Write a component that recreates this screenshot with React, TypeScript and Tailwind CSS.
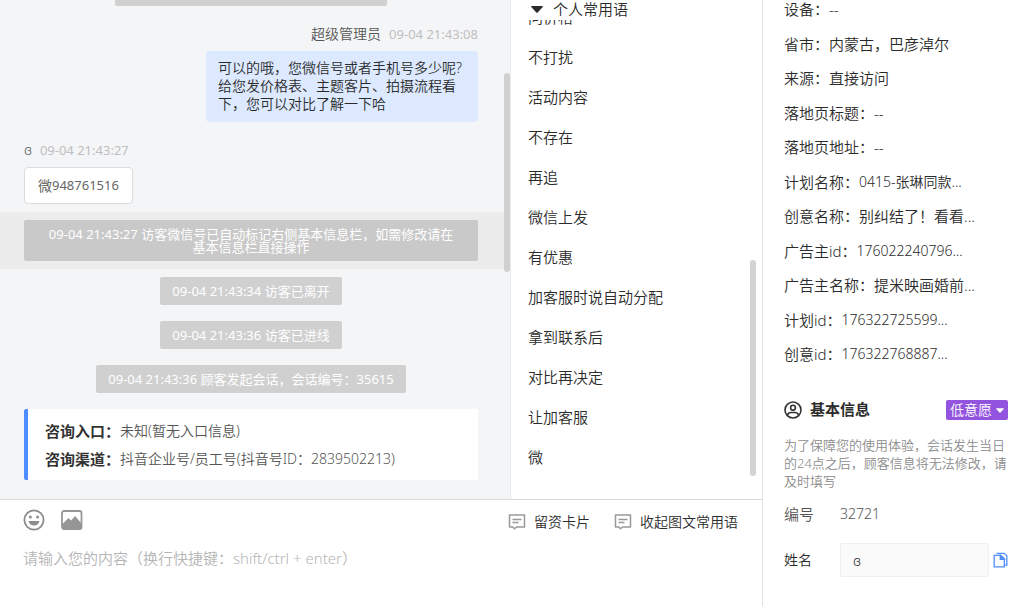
import React from 'react';

type Notice = { time: string; text: string; active?: boolean };

const notices: Notice[] = [
  { time: '09-04 21:43:27', text: '访客微信号已自动标记右侧基本信息栏，如需修改请在基本信息栏直接操作', active: true },
  { time: '09-04 21:43:34', text: '访客已离开' },
  { time: '09-04 21:43:36', text: '访客已进线' },
  { time: '09-04 21:43:36', text: '顾客发起会话，会话编号：35615' },
];

const phrases = [
  '问价格',
  '不打扰',
  '活动内容',
  '不存在',
  '再追',
  '微信上发',
  '有优惠',
  '加客服时说自动分配',
  '拿到联系后',
  '对比再决定',
  '让加客服',
  '微',
];

const details = [
  { label: '设备', value: '--' },
  { label: '省市', value: '内蒙古，巴彦淖尔' },
  { label: '来源', value: '直接访问' },
  { label: '落地页标题', value: '--' },
  { label: '落地页地址', value: '--' },
  { label: '计划名称', value: '0415-张琳同款...' },
  { label: '创意名称', value: '别纠结了！看看...' },
  { label: '广告主id', value: '176022240796...' },
  { label: '广告主名称', value: '提米映画婚前...' },
  { label: '计划id', value: '176322725599...' },
  { label: '创意id', value: '176322768887...' },
];

const SmileIcon = () => (
  <svg width="22" height="22" viewBox="0 0 22 22" fill="none">
    <circle cx="11" cy="11" r="9.6" stroke="#8c8c8c" strokeWidth="1.8" />
    <circle cx="7.4" cy="8" r="1.5" fill="#8c8c8c" />
    <circle cx="14.6" cy="8" r="1.5" fill="#8c8c8c" />
    <path d="M5.5 12h11c-.4 2.7-2.6 4.6-5.5 4.6S5.9 14.7 5.5 12z" fill="#8c8c8c" />
  </svg>
);

const ImageIcon = () => (
  <svg width="22" height="20" viewBox="0 0 22 20" fill="none">
    <rect x="1" y="1" width="19.5" height="18" rx="2" stroke="#969696" strokeWidth="1.8" />
    <path d="M1 14.5l6.5-6.5 2.5 2.5 4.2-4.5 6.3 7.5V18a1 1 0 0 1-1 1H2a1 1 0 0 1-1-1z" fill="#969696" />
  </svg>
);

const CardIcon = () => (
  <svg width="18" height="16" viewBox="0 0 18 16" fill="none" stroke="#999" strokeWidth="1.5">
    <path d="M1.5 1h15v12H8.5l-2 1.7L5 13H1.5z" strokeLinejoin="round" />
    <path d="M4.5 5.5h9M4.5 8.5h6" />
  </svg>
);

const UserIcon = () => (
  <svg width="18" height="18" viewBox="0 0 18 18" fill="none" stroke="#333" strokeWidth="1.6">
    <circle cx="9" cy="9" r="8" />
    <circle cx="9" cy="6.7" r="2.4" />
    <path d="M3.3 14.3c.9-2.2 2.2-2.8 3.7-2.8h4c1.5 0 2.8.6 3.7 2.8" />
  </svg>
);

const CopyIcon = () => (
  <svg width="15" height="16" viewBox="0 0 15 16" fill="none" stroke="#4d8dff" strokeWidth="1.3">
    <path d="M3.5 1.3h7.7l2.6 2.5v9.4h-2" />
    <path d="M1.2 3.3h6.6l3.5 3.5v8H1.2z" />
    <path d="M7.3 3.3v4h4z" fill="#4d8dff" />
  </svg>
);

const Caret = ({ className }: { className: string }) => (
  <svg className={className} viewBox="0 0 12 7" fill="currentColor">
    <path d="M.8 0h10.4c.6 0 .9.7.5 1.1L6.7 6.5c-.4.4-1 .4-1.400 0L.3 1.100C-.1.700.2 0 .8 0z" />
  </svg>
);

const NoticeRow = ({ time, text, active }: Notice) => (
  <div className={active ? 'flex justify-center bg-[#ececec] py-2 pr-8 pl-6' : 'flex justify-center py-2 pr-8 pl-6'}>
    <div
      className={
        active
          ? 'w-full rounded-xs bg-[#c9c9c9] px-5 pt-2 pb-[7px] text-center text-[13px] leading-[13px] font-normal text-white'
          : 'rounded-xs bg-[#d0d0d0] px-3 pt-2 pb-[7px] text-center text-[13px] leading-[13px] font-normal text-white'
      }
    >
      {time} {text}
    </div>
  </div>
);

const App = () => {
  return (
    <div className="flex h-screen overflow-hidden bg-white font-['Noto_Sans','Noto_Sans_CJK_SC',sans-serif] text-sm font-[350] text-[#2b2b2b]">
      <main className="flex min-w-0 flex-1 flex-col">
        <div className="flex min-h-0 flex-1">
          {/* Conversation */}
          <section className="relative flex min-w-0 flex-1 flex-col justify-end overflow-hidden bg-[#f4f5f7] pb-[11px]">
            <div className="flex shrink-0 justify-center py-2 pr-8 pl-6">
              <div className="h-7 w-[272px] rounded-xs bg-[#d0d0d0]"></div>
            </div>

            <div className="flex flex-col items-end px-8 py-2">
              <div className="mb-[5px] flex h-6 items-center gap-2">
                <span className="text-[#555]">超级管理员</span>
                <span className="text-[13px] font-normal text-[#bfbfbf]">09-04 21:43:08</span>
              </div>
              <div className="w-[272px] rounded bg-[#dce9ff] px-3 pt-2 pb-[9px] leading-[18px]">
                可以的哦，您微信号或者手机号多少呢?给您发价格表、主题客片、拍摄流程看下，您可以对比了解一下哈
              </div>
            </div>

            <div className="flex flex-col items-start px-6 py-2">
              <div className="mb-[5px] flex h-6 items-center gap-2">
                <span className="text-[#555]">ɞ</span>
                <span className="text-[13px] font-normal text-[#bfbfbf]">09-04 21:43:27</span>
              </div>
              <div className="flex rounded border border-[#dcdcdc] bg-white px-[13px] py-2 leading-[19px] font-normal text-[#666]">
                微<span className="text-[13px] leading-[19px]">948761516</span>
              </div>
            </div>

            {notices.map((notice, index) => (
              <NoticeRow key={index} {...notice} />
            ))}

            <div className="py-2 pr-8 pl-6">
              <div className="rounded-xs border-l-4 border-[#4d8dff] bg-white pt-2 pb-[7px] pl-[17px] leading-7 text-[#555]">
                <p className="flex">
                  <b className="text-[15px] leading-7 font-bold text-[#333]">咨询入口：</b>未知(暂无入口信息)
                </p>
                <p className="flex">
                  <b className="text-[15px] leading-7 font-bold text-[#333]">咨询渠道：</b>抖音企业号/员工号(抖音号ID：2839502213)
                </p>
              </div>
            </div>

            <div className="absolute top-[73px] right-0 h-[199px] w-1.5 rounded-full bg-[#d0d0d0]"></div>
          </section>

          {/* Quick replies */}
          <section className="relative flex w-[252px] shrink-0 flex-col border-l border-[#ebebeb] text-[15px]">
            <button className="flex h-5 shrink-0 items-start gap-2.5 pl-5 text-left leading-[18px]">
              <Caret className="mt-1.5 h-[7px] w-3" />
              个人常用语
            </button>
            <ul className="flex min-h-0 flex-1 flex-col justify-end overflow-hidden pb-[22px] pl-[17px]">
              {phrases.map((phrase) => (
                <li key={phrase} className="h-10 shrink-0 leading-10">{phrase}</li>
              ))}
            </ul>
            <div className="absolute top-[260px] right-1.5 h-[216px] w-1.5 rounded-full bg-[#d3d3d3]"></div>
          </section>
        </div>

        {/* Message editor */}
        <section className="shrink-0 border-t border-[#d9d9d9] pr-6 pl-[23px]">
          <div className="flex h-10 items-center justify-between">
            <div className="flex items-center gap-4">
              <button aria-label="表情"><SmileIcon /></button>
              <button aria-label="图片"><ImageIcon /></button>
            </div>
            <div className="flex items-center gap-6 pt-1">
              <button className="flex items-center gap-2"><CardIcon />留资卡片</button>
              <button className="flex items-center gap-2"><CardIcon />收起图文常用语</button>
            </div>
          </div>
          <textarea
            aria-label="请输入您的内容"
            className="block h-[66px] w-full resize-none pt-1.5 text-[15px] leading-6 outline-none placeholder:text-[#b5b5b5]"
            placeholder="请输入您的内容（换行快捷键：shift/ctrl + enter）"
          />
        </section>
      </main>

      {/* Visitor details */}
      <aside className="flex w-[267px] shrink-0 flex-col border-l border-[#e4e4e4] pr-[21px] pl-[21px] text-[15px]">
        <dl className="flex min-h-0 flex-1 flex-col justify-between">
          {details.map(({ label, value }) => (
            <div key={label} className="flex leading-[18px] whitespace-nowrap">
              <dt>{label}：</dt>
              <dd className={/^\d/.test(value) ? 'text-sm leading-[18px]' : ''}>{value}</dd>
            </div>
          ))}
        </dl>

        <div className="shrink-0 pt-[37px] pb-[29px]">
          <div className="flex h-5 items-center justify-between">
            <h2 className="flex items-center gap-2 font-bold"><UserIcon />基本信息</h2>
            <button className="flex h-5 items-center gap-1 rounded-xs bg-[#9254de] px-1 text-sm text-white">
              低意愿
              <Caret className="h-[5px] w-2" />
            </button>
          </div>
          <p className="mt-4 text-[13px] leading-[18px] text-[#8c8c8c]">
            为了保障您的使用体验，会话发生当日的24点之后，顾客信息将无法修改，请及时填写
          </p>
          <div className="mt-3 flex leading-6 text-[#555]">
            <span className="w-14">编号</span>
            <span className="text-sm leading-6">32721</span>
          </div>
          <div className="mt-[17px] flex items-center">
            <label htmlFor="name" className="w-14 shrink-0 text-sm">姓名</label>
            <input
              id="name"
              defaultValue="ɞ"
              className="h-[34px] min-w-0 flex-1 rounded-xs border border-[#f0f0f0] bg-[#fafafa] px-3 text-sm outline-none"
            />
            <button aria-label="复制" className="ml-1"><CopyIcon /></button>
          </div>
        </div>
      </aside>
    </div>
  );
};

export default App;
